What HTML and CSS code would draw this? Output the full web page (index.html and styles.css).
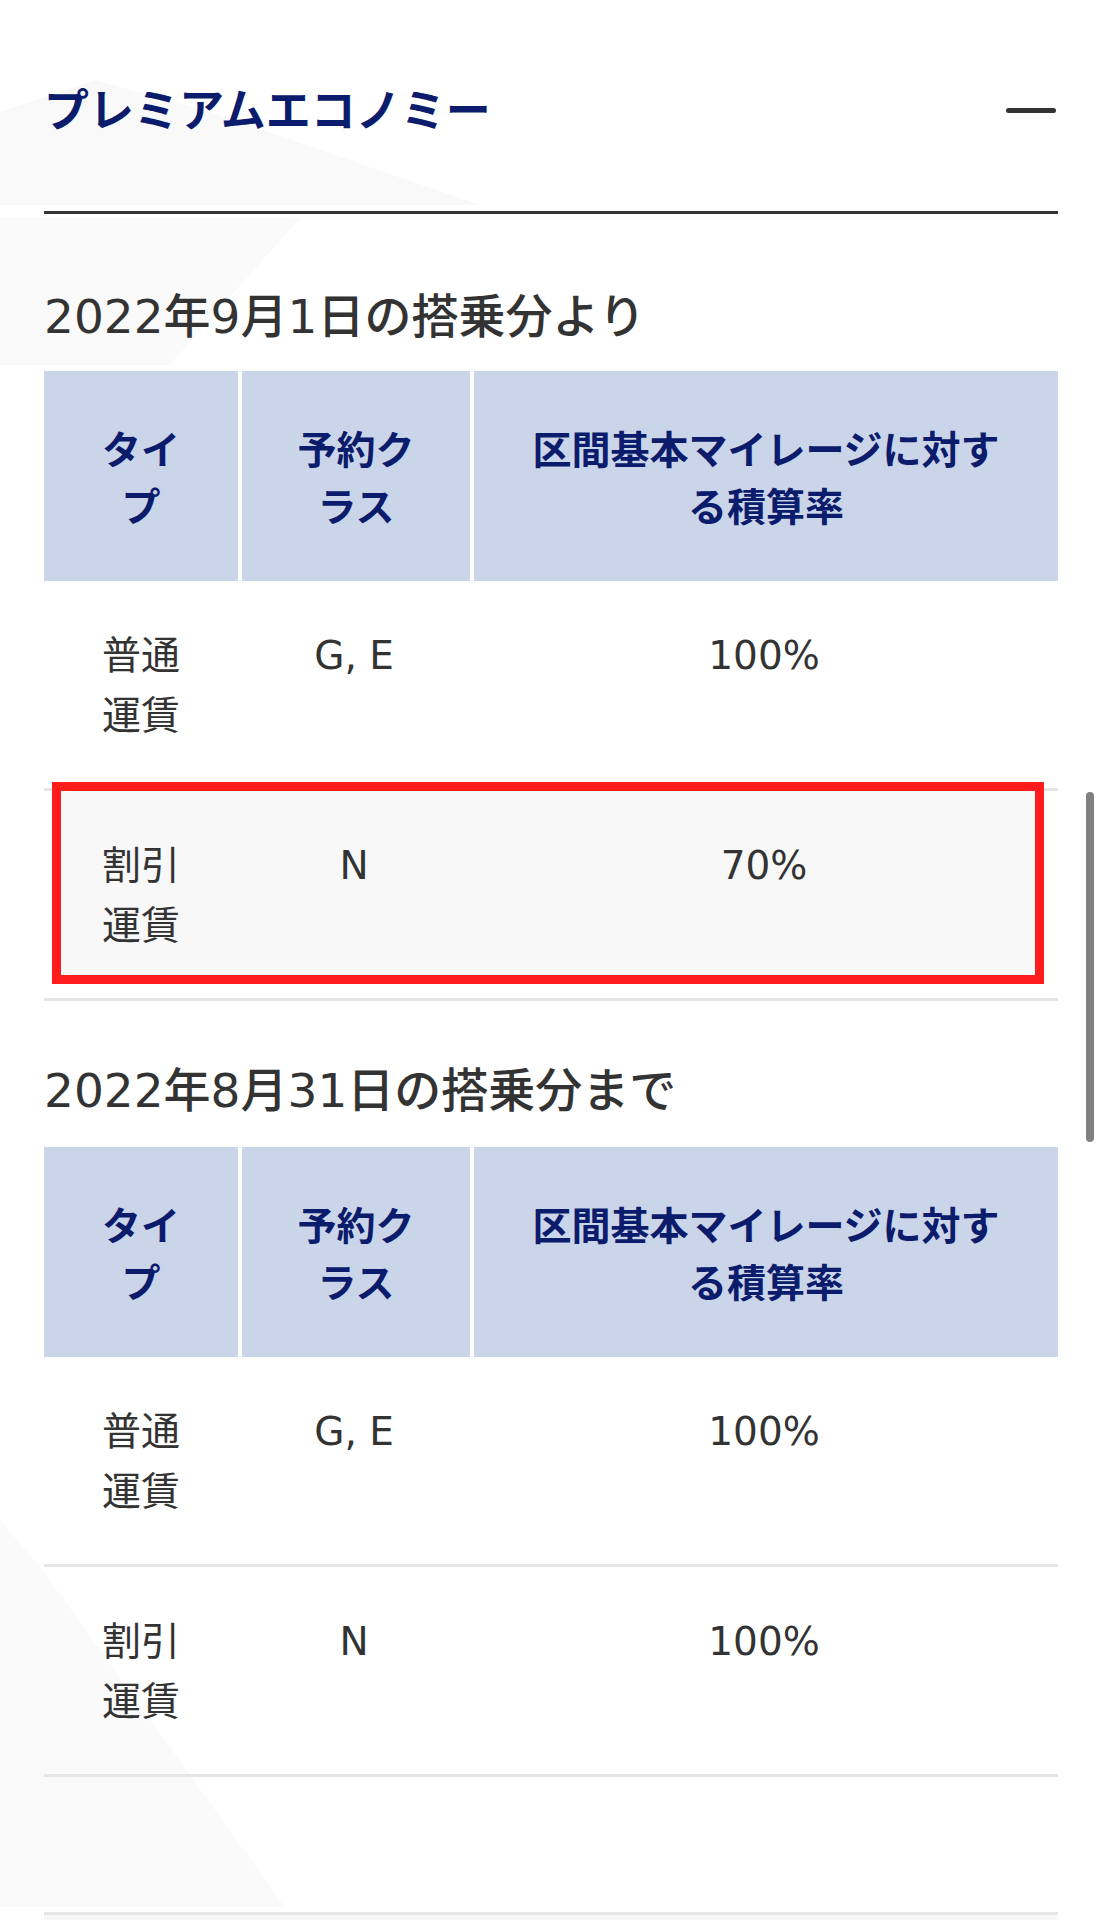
FILE: index.html
```html
<!DOCTYPE html>
<html lang="ja">
<head>
<meta charset="utf-8">
<title>プレミアムエコノミー</title>
<link rel="stylesheet" href="styles.css">
</head>
<body>
<div class="page">
  <svg class="bg" width="1102" height="1920" viewBox="0 0 1102 1920" aria-hidden="true">
    <polygon points="0,112 95,80 210,112 480,205 0,205" fill="#f9f9fa"/>
    <polygon points="0,218 300,218 170,365 0,365" fill="#fafafa"/>
    <polygon points="0,1520 44,1572 285,1907 0,1907" fill="#fafafa"/>
  </svg>

  <div class="content">
    <div class="acc-head">
      <h2 class="acc-title">プレミアムエコノミー</h2>
      <span class="minus"></span>
    </div>

    <h3 class="period period-first">2022年9月1日の搭乗分より</h3>
    <div class="table-wrap">
      <div class="highlight-fill"></div>
      <table class="rate">
        <colgroup><col class="c1"><col class="c2"><col class="c3"></colgroup>
        <thead>
          <tr><th>タイプ</th><th class="sep">予約クラス</th><th class="sep">区間基本マイレージに対する積算率</th></tr>
        </thead>
        <tbody>
          <tr><td>普通運賃</td><td>G, E</td><td>100%</td></tr>
          <tr><td>割引運賃</td><td>N</td><td>70%</td></tr>
        </tbody>
      </table>
      <div class="highlight"></div>
    </div>

    <h3 class="period period-second">2022年8月31日の搭乗分まで</h3>
    <div class="table-wrap">
      <table class="rate">
        <colgroup><col class="c1"><col class="c2"><col class="c3"></colgroup>
        <thead>
          <tr><th>タイプ</th><th class="sep">予約クラス</th><th class="sep">区間基本マイレージに対する積算率</th></tr>
        </thead>
        <tbody>
          <tr><td>普通運賃</td><td>G, E</td><td>100%</td></tr>
          <tr><td>割引運賃</td><td>N</td><td>100%</td></tr>
        </tbody>
      </table>
    </div>

    <div class="acc-end"></div>
  </div>

  <div class="scroll-indicator"></div>
</div>
</body>
</html>
```

FILE: styles.css
```css
html, body {
  margin: 0;
  padding: 0;
  background: #ffffff;
}

.page {
  position: relative;
  z-index: 0;
  width: 1102px;
  min-height: 1920px;
  overflow: hidden;
  font-family: "DejaVu Sans", "Noto Sans CJK JP", sans-serif;
  color: #333333;
}

.bg {
  position: absolute;
  left: 0;
  top: 0;
  z-index: 0;
}

.content {
  position: relative;
  z-index: 1;
  padding: 0 44px 0 44px;
}

.acc-head {
  display: flex;
  align-items: center;
  justify-content: space-between;
  box-sizing: border-box;
  height: 214px;
  padding-top: 4px;
  border-bottom: 3px solid #333333;
}

.acc-title {
  margin: 0;
  font-family: "Noto Sans CJK JP", sans-serif;
  font-size: 45px;
  line-height: 64px;
  font-weight: 700;
  color: #0b1c6c;
}

.minus {
  display: block;
  width: 50px;
  height: 5px;
  margin-top: 6px;
  margin-right: 2px;
  border-radius: 3px;
  background: #333333;
}

.period {
  margin: 0;
  font-size: 47px;
  line-height: 64px;
  font-weight: 500;
  color: #333333;
}

.period-first {
  margin-top: 71px;
  margin-bottom: 22px;
}

.period-second {
  margin-top: 58px;
  margin-bottom: 24px;
}

.table-wrap {
  position: relative;
}

.rate {
  position: relative;
  width: 100%;
  table-layout: fixed;
  border-collapse: separate;
  border-spacing: 0;
  font-size: 39px;
}

.c1 { width: 194px; }
.c2 { width: 232px; }
.c3 { width: auto; }

.rate th {
  height: 210px;
  box-sizing: border-box;
  padding: 0 44px;
  background: #cbd5e9;
  color: #0b1c6c;
  font-family: "Noto Sans CJK JP", sans-serif;
  font-weight: 700;
  line-height: 57px;
  text-align: center;
  vertical-align: middle;
}

.rate th.sep {
  border-left: 4px solid #ffffff;
}

.rate td {
  padding: 45px 44px 42px;
  line-height: 60px;
  font-weight: 400;
  color: #333333;
  text-align: center;
  vertical-align: top;
  border-bottom: 3px solid #e6e6e6;
}

.highlight-fill {
  position: absolute;
  top: 420px;
  left: 17px;
  width: 974px;
  height: 184px;
  background: #f8f8f8;
}

.highlight {
  position: absolute;
  top: 411px;
  left: 8px;
  width: 992px;
  height: 202px;
  box-sizing: border-box;
  border: 9px solid #ff1c1c;
  pointer-events: none;
}

.acc-end {
  margin-top: 135px;
  height: 10px;
  border-top: 3px solid #e6e6e6;
  background: #f7f7f7;
}

.scroll-indicator {
  position: absolute;
  z-index: 2;
  top: 792px;
  right: 8px;
  width: 8px;
  height: 350px;
  border-radius: 4px;
  background: #808080;
}
```
